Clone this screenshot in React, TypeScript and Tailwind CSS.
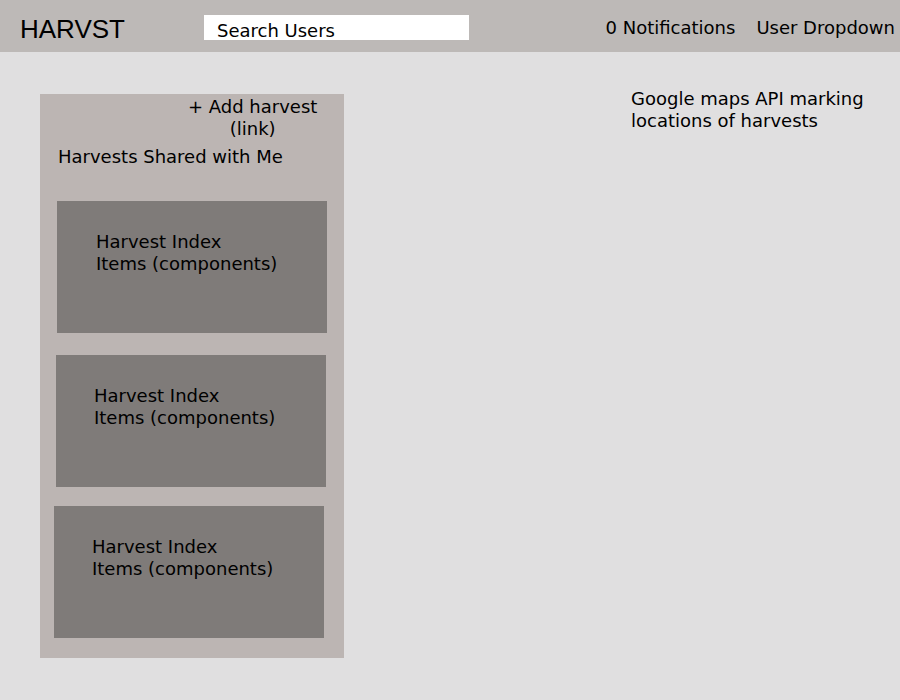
const items = [
  { ml: "ml-[17px]", mt: "mt-[33px]", pl: "pl-[39px]" },
  { ml: "ml-[16px]", mt: "mt-[22px]", pl: "pl-[38px]" },
  { ml: "ml-[14px]", mt: "mt-[19px]", pl: "pl-[38px]" },
];

export default function App() {
  return (
    <div className="w-[900px] h-[700px] bg-[#e0dfe0] text-black font-['DejaVu_Sans',sans-serif] overflow-hidden">
      <header className="h-[52px] bg-[#bdb9b7] flex items-center relative">
        <h1 className="ml-[20px] text-[26px] font-['Liberation_Sans',sans-serif] leading-none mt-[5px]">HARVST</h1>
        <div className="ml-[79px] mt-[3px] w-[265px] h-[25px] bg-white flex items-end pl-[13px] text-[18px] leading-[22px]">
          <span className="translate-y-[2px]">Search Users</span>
        </div>
        <div className="ml-auto mr-[5px] flex gap-[21px] text-[18px] mt-[3px]">
          <span>0 Notifications</span>
          <span>User Dropdown</span>
        </div>
      </header>

      <main className="flex pt-[36px] pl-[40px]">
        <aside className="mt-[6px] w-[304px] h-[564px] bg-[#bcb5b3] flex flex-col items-start text-[18px] leading-[22px]">
          <div className="pt-[2px] ml-[148px] text-center whitespace-nowrap">
            <div>+ Add harvest</div>
            <div>(link)</div>
          </div>
          <div className="pl-[18px] mt-[6px]">Harvests Shared with Me</div>
          {items.map((it, i) => (
            <div key={i} className={`${it.ml} ${it.mt} ${it.pl} w-[270px] h-[132px] bg-[#7f7b79] pt-[30px]`}>
              <div>Harvest Index</div>
              <div>Items (components)</div>
            </div>
          ))}
        </aside>

        <section className="ml-[287px] text-[18px] leading-[22px]">
          <p>Google maps API marking</p>
          <p>locations of harvests</p>
        </section>
      </main>
    </div>
  );
}
